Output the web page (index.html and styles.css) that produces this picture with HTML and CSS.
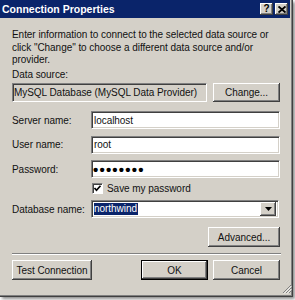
FILE: index.html
```html
<!DOCTYPE html>
<html>
<head>
<meta charset="utf-8">
<link rel="stylesheet" href="styles.css">
</head>
<body>
<div class="window">
  <div class="titlebar">
    <span class="title">Connection Properties</span>
    <div class="tb-btns">
      <span class="tb-btn help">?</span>
      <span class="tb-btn close"><svg width="8" height="7" viewBox="0 0 8 7"><path d="M0.5 0.5 L7.5 6.5 M7.5 0.5 L0.5 6.5" stroke="#000" stroke-width="1.9"/></svg></span>
    </div>
  </div>
  <div class="content">
    <p class="intro">Enter information to connect to the selected data source or<br>click "Change" to choose a different data source and/or<br>provider.</p>
    <div class="ds-label">Data source:</div>
    <div class="ds-row">
      <div class="field readonly">MySQL Database (MySQL Data Provider)</div>
      <div class="btn change">Change...</div>
    </div>
    <div class="form-row first">
      <span class="lbl">Server name:</span>
      <div class="field">localhost</div>
    </div>
    <div class="form-row">
      <span class="lbl">User name:</span>
      <div class="field">root</div>
    </div>
    <div class="form-row">
      <span class="lbl">Password:</span>
      <div class="field pw">••••••••</div>
    </div>
    <div class="check-row">
      <span class="checkbox"><svg width="9" height="9" viewBox="0 0 9 9"><path d="M1.5 4 L3.5 6.2 L7.5 1.8" stroke="#000" stroke-width="1.7" fill="none"/></svg></span>
      <span class="check-lbl">Save my password</span>
    </div>
    <div class="form-row combo-row">
      <span class="lbl">Database name:</span>
      <div class="field combo">
        <span class="sel">northwind</span>
        <span class="dd"><svg width="7" height="4" viewBox="0 0 7 4"><path d="M0 0 H7 L3.5 4 Z" fill="#000"/></svg></span>
      </div>
    </div>
    <div class="adv-row">
      <div class="btn adv">Advanced...</div>
    </div>
    <div class="sep"></div>
    <div class="bottom-row">
      <div class="btn test">Test Connection</div>
      <div class="right-btns">
        <div class="btn ok">OK</div>
        <div class="btn cancel">Cancel</div>
      </div>
    </div>
    <svg class="grip" width="10" height="10" viewBox="0 0 10 10">
      <path d="M9 1 L1 9 M9 4 L4 9 M9 7 L7 9" stroke="#808080" stroke-width="1"/>
      <path d="M9.8 1.8 L1.8 9.8 M9.8 4.8 L4.8 9.8" stroke="#fff" stroke-width="0.8"/>
    </svg>
  </div>
</div>
</body>
</html>
```

FILE: styles.css
```css
* { box-sizing: border-box; margin: 0; padding: 0; }
body {
  margin: 0;
  width: 295px;
  height: 300px;
  background: #fff;
  font-family: "Liberation Sans", Arial, sans-serif;
  font-size: 10px;
  color: #111;
  overflow: hidden;
}
.window {
  width: 293px;
  height: 297px;
  background: #d4d0c8;
  padding: 0 3px 3px 0;
  box-shadow: inset -1px -1px 0 #404040, inset -2px -2px 0 #808080, 2px 2px 3px rgba(0,0,0,0.45);
  display: flex;
  flex-direction: column;
}
.titlebar {
  height: 18px;
  background: #0a246a;
  display: flex;
  align-items: center;
  justify-content: space-between;
  padding: 0 2px 0 2px;
}
.title {
  color: #fff;
  font-weight: bold;
  font-size: 10.5px;
}
.tb-btns { display: flex; gap: 2px; }
.tb-btn {
  width: 13px;
  height: 12px;
  background: #d4d0c8;
  box-shadow: inset -1px -1px 0 #404040, inset 1px 1px 0 #fff, inset -2px -2px 0 #808080;
  display: flex;
  align-items: center;
  justify-content: center;
  font-weight: bold;
  font-size: 10px;
  line-height: 1;
  color: #000;
}
.content {
  flex: 1;
  position: relative;
  display: flex;
  flex-direction: column;
  padding: 11px 10px 0 12px;
  letter-spacing: -0.05px;
}
.intro { line-height: 12.5px; }
.ds-label { line-height: 12px; margin-top: 2.5px; }
.ds-row {
  display: flex;
  gap: 6px;
  margin-top: 2px;
  height: 19px;
}
.field {
  background: #fff;
  border-top: 1px solid #808080;
  border-left: 1px solid #808080;
  border-right: 1px solid #fff;
  border-bottom: 1px solid #fff;
  box-shadow: inset 1px 1px 0 #404040, inset -1px -1px 0 #d4d0c8;
  display: flex;
  align-items: center;
  padding-left: 2px;
  flex: 1;
  white-space: nowrap;
}
.field.readonly { background: #d4d0c8; padding-left: 1px; }
.btn {
  background: #d4d0c8;
  box-shadow: inset -1px -1px 0 #404040, inset 1px 1px 0 #fff, inset -2px -2px 0 #808080;
  display: flex;
  align-items: center;
  justify-content: center;
  white-space: nowrap;
}
.btn.change { width: 67px; }
.form-row {
  display: flex;
  height: 18px;
  margin-top: 6.5px;
  align-items: stretch;
}
.form-row.first { margin-top: 9px; }
.lbl {
  width: 79px;
  display: flex;
  align-items: center;
}
.pw { font-size: 15px; letter-spacing: 1.2px; font-weight: bold; padding-left: 1px; color: #000; }
.check-row {
  display: flex;
  align-items: center;
  height: 13px;
  margin-top: 4px;
  padding-left: 80px;
}
.checkbox {
  width: 11px;
  height: 11px;
  background: #fff;
  border-top: 1px solid #808080;
  border-left: 1px solid #808080;
  border-right: 1px solid #fff;
  border-bottom: 1px solid #fff;
  box-shadow: inset 1px 1px 0 #404040;
  display: flex;
  align-items: center;
  justify-content: center;
}
.check-lbl { margin-left: 4px; }
.combo-row { margin-top: 5px; }
.combo {
  justify-content: space-between;
  padding: 2px 2px 2px 2px;
  margin-right: 1px;
}
.sel {
  background: #0a246a;
  color: #fff;
  padding: 0 1px 0 0;
  line-height: 12px;
}
.dd {
  width: 16px;
  height: 14px;
  background: #d4d0c8;
  box-shadow: inset -1px -1px 0 #404040, inset 1px 1px 0 #fff, inset -2px -2px 0 #808080;
  display: flex;
  align-items: center;
  justify-content: center;
}
.adv-row {
  display: flex;
  justify-content: flex-end;
  margin-top: 9px;
  height: 20px;
}
.btn.adv { width: 72px; }
.sep {
  margin-top: 6px;
  height: 2px;
  border-top: 1px solid #808080;
  border-bottom: 1px solid #fff;
  margin-right: -1px;
}
.bottom-row {
  display: flex;
  justify-content: space-between;
  margin-top: 5px;
  height: 20px;
}
.btn.test { width: 80px; }
.right-btns { display: flex; gap: 5px; }
.btn.ok {
  width: 67px;
  border: 1px solid #000;
}
.btn.cancel { width: 67px; }
.grip {
  position: absolute;
  right: -2px;
  bottom: 0px;
}
```
